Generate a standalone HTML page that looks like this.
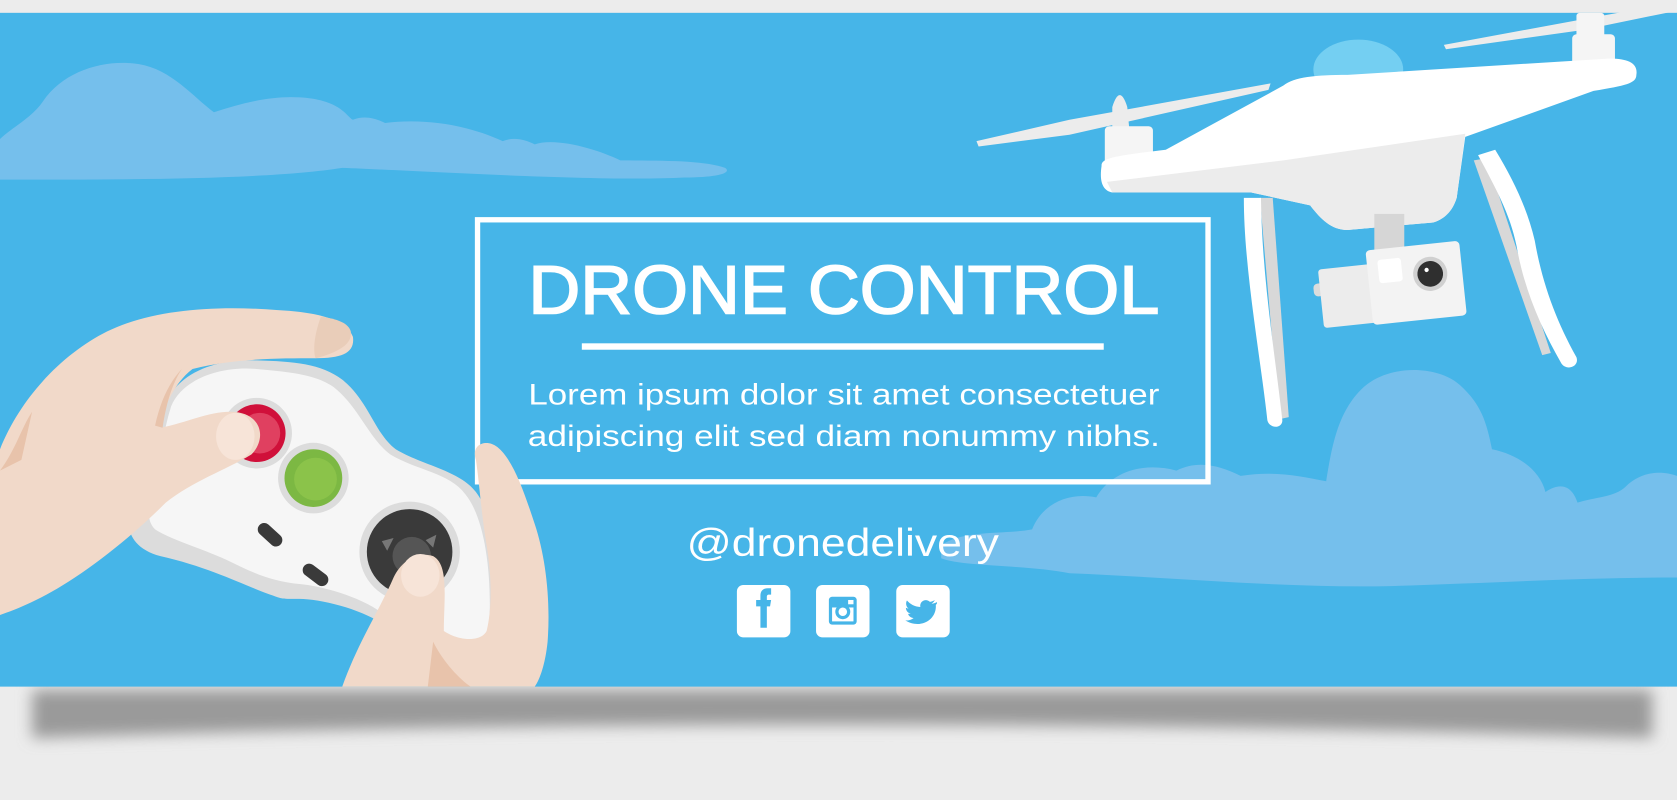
<!DOCTYPE html>
<html><head><meta charset="utf-8"><style>
html,body{margin:0;padding:0;background:#ececec;}
svg{display:block;}
</style></head><body>
<svg width="1677" height="800" viewBox="0 0 1568 748" preserveAspectRatio="none" xmlns="http://www.w3.org/2000/svg">
<defs>
<filter id="bl" x="-10%" y="-50%" width="120%" height="200%"><feGaussianBlur stdDeviation="7"/></filter>
</defs>
<rect width="1568" height="748" fill="#ececec"/>
<path d="M30 645 L1545 645 L1545 690 Q780 665 30 690 Z" fill="#9a9a9a" filter="url(#bl)"/>
<rect x="0" y="12" width="1568" height="630" fill="#46b5e8"/>
<!-- clouds -->
<path d="M0 130 C10 120 30 110 40 95 C60 65 100 55 130 60 C160 65 180 90 200 105 C230 95 260 88 290 92 C320 96 325 110 330 112 C340 108 350 110 360 115 C400 110 440 118 470 132 C480 128 490 130 500 135 C520 128 560 140 580 150 C620 150 660 150 678 157 C685 162 670 166 640 166 C560 170 400 160 320 157 C250 168 120 168 0 168 Z" fill="#75bfec"/>
<path d="M880 510 C900 495 940 500 965 495 C975 470 1000 460 1025 465 C1040 440 1070 432 1100 440 C1120 430 1140 435 1160 445 C1190 440 1215 445 1240 450 C1245 420 1250 385 1275 362 C1300 340 1345 342 1365 360 C1385 378 1390 395 1395 420 C1420 425 1440 440 1445 460 C1460 450 1470 455 1475 470 C1490 465 1510 465 1520 455 C1535 440 1555 440 1568 445 L1568 540 C1480 540 1400 545 1300 548 C1200 550 1100 540 1000 536 C960 528 900 530 880 522 Z" fill="#75bfec"/>
<!-- text box -->
<rect x="446.5" y="205.5" width="683" height="245" fill="none" stroke="#fff" stroke-width="5"/>
<text x="789" y="293" text-anchor="middle" font-family="Liberation Sans, sans-serif" font-size="64" fill="#fff" stroke="#fff" stroke-width="1.5" textLength="590" lengthAdjust="spacingAndGlyphs">DRONE CONTROL</text>
<rect x="544" y="321" width="488" height="6" fill="#fff"/>
<text x="789" y="378" text-anchor="middle" font-family="Liberation Sans, sans-serif" font-size="28" fill="#fff" textLength="590" lengthAdjust="spacingAndGlyphs">Lorem ipsum dolor sit amet consectetuer</text>
<text x="789" y="417" text-anchor="middle" font-family="Liberation Sans, sans-serif" font-size="28" fill="#fff" textLength="591" lengthAdjust="spacingAndGlyphs">adipiscing elit sed diam nonummy nibhs.</text>
<text x="788" y="520" text-anchor="middle" font-family="Liberation Sans, sans-serif" font-size="36" fill="#fff" textLength="292" lengthAdjust="spacingAndGlyphs">@dronedelivery</text>
<!-- icons -->
<rect x="689" y="547" width="50" height="49" rx="6" fill="#fff"/>
<path d="M711 587 V567 H707 V561 H711 V557 C711 552 714 550 718 550 H721 V556 H719 C717.5 556 717 557 717 558 V561 H721 L720 567 H717 V587 Z" fill="#46b5e8"/>
<rect x="763" y="547" width="50" height="49" rx="6" fill="#fff"/>
<rect x="775" y="558" width="26" height="26" rx="3" fill="#46b5e8"/>
<rect x="778" y="568" width="20" height="13" fill="#fff"/>
<circle cx="788" cy="572" r="7" fill="#46b5e8"/><circle cx="788" cy="572" r="4" fill="#fff"/>
<rect x="793" y="561" width="5" height="4" fill="#fff"/>
<rect x="838" y="547" width="50" height="49" rx="6" fill="#fff"/>
<path d="M876 563 C874 564 872 564.5 871 564.5 C872.5 563.5 873.5 562.3 874 561 C872.5 562 871 562.4 869.5 562.8 C866 559 859.5 562 860.5 567.5 C855 567.3 851 564.8 848 561.5 C846.5 564 847.3 567.5 849.5 569 C848.6 569 847.8 568.7 847 568.3 C847 571 849 573.3 851.5 573.8 C850.7 574 849.8 574.1 849 573.9 C849.7 576.2 851.8 577.8 854.2 577.9 C852 579.6 849.3 580.4 846.5 580.1 C860 588.5 876 580 875 565.5 C875.8 564.8 876.5 564 876 563 Z" fill="#46b5e8"/>
<!-- drone -->
<path d="M913 132 L1000 112 L1188 78 L1186 84 L1000 126 L915 137 Z" fill="#ececec"/>
<path d="M1350 42 L1480 18 L1568 2 L1568 10 L1480 28 L1352 46 Z" fill="#ececec"/>
<path d="M1040 100 Q1047 78 1054 100 L1056 122 L1040 122 Z" fill="#ececec"/>
<rect x="1033" y="118" width="45" height="40" rx="4" fill="#f5f5f5"/>
<rect x="1474" y="12" width="26" height="25" rx="3" fill="#f5f5f5"/>
<rect x="1470" y="32" width="40" height="30" rx="4" fill="#f5f5f5"/>
<ellipse cx="1270" cy="65" rx="42" ry="28" fill="#74cff2"/>
<!-- legs -->
<path d="M1178 185 L1190 185 L1205 390 L1196 392 Z" fill="#d8d8d8"/>
<path d="M1163 185 C1163 250 1178 330 1185 393 C1187 401 1199 401 1199 393 C1192 330 1180 260 1179 185 Z" fill="#fff"/>
<path d="M1378 150 L1390 148 L1450 330 L1442 332 Z" fill="#d8d8d8"/>
<path d="M1382 145 C1398 175 1412 200 1418 230 C1425 270 1440 305 1460 340 C1465 347 1477 343 1474 334 C1455 300 1442 265 1435 225 C1428 195 1415 168 1398 140 Z" fill="#fff"/>
<!-- body -->
<path d="M1030 155 C1030 148 1040 146 1090 140 L1200 80 C1210 72 1230 70 1260 70 L1500 55 C1520 54 1532 58 1530 70 C1530 78 1520 80 1490 85 L1370 128 L1362 185 C1358 198 1350 205 1340 208 L1260 215 C1245 215 1235 205 1225 192 L1170 180 L1040 180 C1030 178 1028 168 1030 155 Z" fill="#fff"/>
<path d="M1035 170 L1200 150 L1370 125 L1362 185 C1358 198 1350 205 1340 208 L1260 215 C1245 215 1235 205 1225 192 L1170 180 L1040 180 Z" fill="#ececec"/>
<rect x="1285" y="200" width="28" height="35" fill="#d6d6d6"/>
<g transform="rotate(-6 1300 265)">
<rect x="1228" y="258" width="10" height="12" rx="4" fill="#dcdcdc"/>
<rect x="1234" y="245" width="55" height="55" rx="3" fill="#ececec"/>
<rect x="1280" y="232" width="88" height="70" rx="4" fill="#f3f3f3"/>
<rect x="1290" y="242" width="22" height="22" rx="3" fill="#fff"/>
<circle cx="1338" cy="260" r="16" fill="#d0d0d0"/>
<circle cx="1338" cy="260" r="12" fill="#2f2f2f"/>
<circle cx="1335" cy="256" r="2" fill="#fff"/>
</g>
<!-- controller -->
<path d="M155 378 C165 350 200 335 240 337 C275 338 300 340 320 355 C345 375 350 405 370 420 C395 435 430 440 445 460 C460 480 470 520 470 570 C470 610 455 625 440 625 C410 625 380 600 360 585 C340 570 300 560 280 560 C260 560 265 560 250 555 C230 548 195 530 150 520 C120 512 115 490 125 470 C135 440 145 405 155 378 Z" fill="#dcdcdc"/>
<path d="M160 380 C170 355 205 342 240 345 C272 348 295 350 312 362 C335 380 345 410 365 425 C390 440 420 442 435 462 C450 480 458 520 458 565 C458 600 448 612 435 612 C410 612 380 590 360 575 C338 558 302 548 280 546 C255 544 235 535 215 525 C195 515 160 505 145 495 C135 485 140 470 145 455 C150 430 152 405 160 380 Z" fill="#f6f6f6"/>
<circle cx="240" cy="405" r="33" fill="#dcdcdc"/><circle cx="240" cy="405" r="27" fill="#d0103a"/><circle cx="243" cy="405" r="19" fill="#e04060"/>
<circle cx="293" cy="447" r="33" fill="#dcdcdc"/><circle cx="293" cy="447" r="27" fill="#7cb843"/><circle cx="295" cy="448" r="20" fill="#8bc34a"/>
<circle cx="383" cy="516" r="47" fill="#dcdcdc"/><circle cx="383" cy="516" r="40" fill="#3a3a3a"/><circle cx="385" cy="520" r="18" fill="#555"/>
<path d="M357 506 L368 503 L362 515 Z M408 500 L398 505 L405 512 Z" fill="#777"/>
<line x1="247" y1="495" x2="258" y2="505" stroke="#3a3a3a" stroke-width="12" stroke-linecap="round"/>
<line x1="289" y1="533" x2="301" y2="542" stroke="#3a3a3a" stroke-width="12" stroke-linecap="round"/>
<!-- left hand -->
<path d="M0 420 C20 370 60 330 100 310 C140 290 200 285 260 290 C300 292 325 300 330 315 C332 330 320 335 295 335 C260 335 220 335 180 345 C160 360 150 390 150 400 C175 395 195 385 215 385 C245 385 250 410 235 425 C210 440 180 450 155 470 C130 495 100 520 70 540 C40 560 15 570 0 575 Z" fill="#f1d9c9"/>
<path d="M170 345 C160 360 155 380 152 400 L145 398 C150 375 158 358 170 345 Z" fill="#e8c3ab"/>
<path d="M0 440 C15 420 20 400 30 385 L20 430 Z" fill="#e8c3ab"/>
<ellipse cx="220" cy="408" rx="18" ry="22" fill="#f7e4d8"/>
<path d="M295 335 C315 330 330 322 328 310 C326 302 315 298 300 296 C295 310 292 325 295 335 Z" fill="#e9cdb9"/>
<!-- right hand -->
<path d="M445 430 C440 415 455 410 465 418 C480 430 490 460 500 490 C510 520 515 560 512 600 C510 620 505 635 500 642 L320 642 C335 600 355 570 368 540 C375 525 390 515 405 520 C420 528 415 560 415 590 C430 600 450 600 455 590 C460 570 460 540 455 510 C450 480 448 450 445 430 Z" fill="#f1d9c9"/>
<path d="M405 600 C415 620 430 635 440 642 L400 642 Z" fill="#e8c3ab"/>
<ellipse cx="393" cy="538" rx="18" ry="20" fill="#f7e4d8"/>
</svg>
</body></html>
